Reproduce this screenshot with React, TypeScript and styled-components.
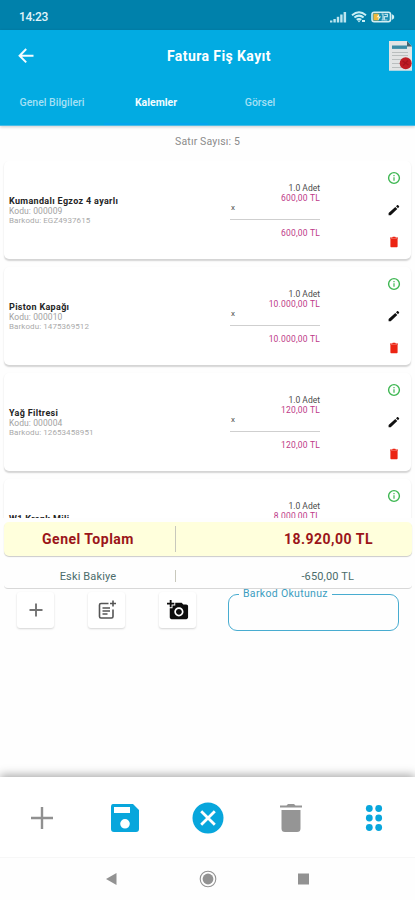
import React from "react";
import styled, { createGlobalStyle } from "styled-components";

const GlobalStyle = createGlobalStyle`
  * { box-sizing: border-box; }
  body { margin: 0; background: #fefefe; font-family: Roboto, "Noto Sans", sans-serif; }
  svg { display: block; flex: none; }
`;

const Screen = styled.div`
  width: 415px;
  height: 900px;
  display: flex;
  flex-direction: column;
  overflow: hidden;
  background: #fefefe;
`;

const StatusBar = styled.div`
  height: 30px;
  flex: none;
  display: flex;
  align-items: center;
  justify-content: space-between;
  padding: 4px 20px 0 19px;
  background: #0081ab;
  color: #e2f5fa;
  font-size: 12px;
  font-weight: 500;
  letter-spacing: -0.3px;
`;

const StatusIcons = styled.div`
  display: flex;
  align-items: center;
  gap: 4px;
`;

const Header = styled.header`
  height: 96px;
  flex: none;
  display: flex;
  flex-direction: column;
  background: #02abe2;
  border-bottom: 1px solid #48bce6;
  box-shadow: 0 1px 3px rgba(0, 0, 0, 0.2);
`;

const TitleRow = styled.div`
  height: 51px;
  display: grid;
  grid-template-columns: 60px 1fr 60px;
  align-items: center;
`;

const IconSlot = styled.div<{ $end?: boolean }>`
  display: flex;
  justify-content: ${(p) => (p.$end ? "flex-end" : "flex-start")};
  padding: ${(p) => (p.$end ? "0 2px 0 0" : "0 0 0 16px")};
`;

const Title = styled.h1`
  margin: 0;
  padding-left: 23px;
  text-align: center;
  font-size: 14px;
  line-height: 18px;
  font-weight: 700;
  letter-spacing: 0.42px;
  color: #fff;
`;

const Tabs = styled.nav`
  height: 44px;
  display: grid;
  grid-template-columns: repeat(4, 104px);
`;

const Tab = styled.div<{ $active?: boolean }>`
  display: flex;
  align-items: center;
  justify-content: center;
  padding-top: 1px;
  font-size: 10.5px;
  font-weight: ${(p) => (p.$active ? 700 : 500)};
  color: ${(p) => (p.$active ? "#f3fcff" : "#a5e0f5")};
  border-bottom: 2px solid ${(p) => (p.$active ? "#03a6ec" : "transparent")};
`;

const RowCount = styled.div`
  height: 35px;
  flex: none;
  padding-top: 9px;
  text-align: center;
  font-size: 10.5px;
  line-height: 13px;
  letter-spacing: 0.15px;
  color: #8b8b8b;
`;

const List = styled.main`
  height: 357px;
  flex: none;
  overflow: hidden;
  padding: 0 4px;
  display: flex;
  flex-direction: column;
  gap: 8px;
`;

const Card = styled.article`
  height: 98px;
  flex: none;
  display: grid;
  grid-template-columns: 1fr 91px 91px;
  border-radius: 5px;
  background: #fff;
  box-shadow: 0 1.5px 1.5px rgba(0, 0, 0, 0.17);
`;

const Product = styled.div`
  padding: 35px 0 0 5px;
  color: #a2a2a2;
  font-size: 8.5px;
  line-height: 10px;
  letter-spacing: 0.08px;
`;

const ProductName = styled.div`
  color: #242424;
  font-size: 9px;
  line-height: 10px;
  font-weight: 700;
  letter-spacing: 0.33px;
`;

const Barcode = styled.div`
  font-size: 8px;
  color: #aaa;
`;

const Amounts = styled.div`
  padding: 22px 0 0 1px;
  text-align: right;
  font-size: 8.5px;
  line-height: 10px;
  color: #4c4c4c;
`;

const Price = styled.div`
  color: #bd3a88;
  letter-spacing: 0.2px;
`;

const Multiplier = styled.div`
  height: 17px;
  margin-bottom: 8px;
  border-bottom: 1px solid #cfcfcf;
  text-align: left;
  padding-left: 1px;
  font-size: 8px;
  line-height: 10px;
`;

const Actions = styled.div`
  display: flex;
  flex-direction: column;
  align-items: center;
  gap: 18px;
  padding: 10px 0 0 57px;
`;

const GrandTotal = styled.div`
  height: 34px;
  flex: none;
  margin: 4px 3px 0 4px;
  display: grid;
  grid-template-columns: 171px 1fr;
  align-items: center;
  border-radius: 5px;
  background: #ffffdc;
  box-shadow: 0 1px 1px rgba(0, 0, 0, 0.2);
  color: #9b1519;
  font-size: 14px;
  line-height: 18px;
  font-weight: 700;
  letter-spacing: 0.5px;
`;

const Balance = styled.div`
  height: 33px;
  flex: none;
  margin: 0 3px 0 4px;
  padding-top: 8px;
  display: grid;
  grid-template-columns: 171px 1fr;
  align-items: center;
  border-radius: 4px;
  border-bottom: 1px solid #d8d8d8;
  color: #4b6c6b;
  font-size: 11px;
  letter-spacing: 0.15px;
`;

const SummaryLabel = styled.div`
  text-align: center;
  padding-right: 3px;
`;

const SummaryValue = styled.div<{ $height: number; $right: number }>`
  height: ${(p) => p.$height}px;
  display: flex;
  align-items: center;
  justify-content: flex-end;
  padding-right: ${(p) => p.$right}px;
  border-left: 1px solid #c8c8bc;
`;

const EntryRow = styled.div`
  flex: none;
  height: 42px;
  display: flex;
  align-items: flex-start;
  padding: 3px 16px 0 17px;
`;

const EntryButton = styled.button`
  width: 37px;
  height: 36px;
  margin-right: 34px;
  padding: 0;
  border: 0;
  border-radius: 3px;
  display: grid;
  place-items: center;
  background: #fff;
  box-shadow: 0 1px 2px rgba(0, 0, 0, 0.17);
`;

const BarcodeField = styled.fieldset`
  flex: 1;
  height: 43px;
  min-width: 0;
  margin: -4px 0 0 -2px;
  padding: 0 0 0 10px;
  border: 1.5px solid #48acd0;
  border-radius: 9px;
`;

const FieldLabel = styled.legend`
  padding: 0 4px;
  font-size: 10.5px;
  line-height: 12px;
  letter-spacing: 0.32px;
  color: #3b9dc0;
`;

const Spacer = styled.div`
  flex: 1;
`;

const Toolbar = styled.footer`
  height: 81px;
  flex: none;
  display: grid;
  grid-template-columns: repeat(5, 83px);
  justify-items: center;
  align-items: center;
  padding-top: 1px;
  background: #fff;
  border-bottom: 1px solid #f7f7f7;
  box-shadow: 0 -2px 9px rgba(0, 0, 0, 0.34);
`;

const SystemNav = styled.div`
  height: 42px;
  flex: none;
  display: flex;
  align-items: center;
  padding-left: 105px;
  gap: 81px;
  background: #fefefe;
`;

const items = [
  { name: "Kumandalı Egzoz 4 ayarlı", code: "000009", barcode: "EGZ4937615", price: "600,00 TL" },
  { name: "Piston Kapağı", code: "000010", barcode: "1475369512", price: "10.000,00 TL" },
  { name: "Yağ Filtresi", code: "000004", barcode: "12653458951", price: "120,00 TL" },
  { name: "W1 Krank Mili", code: "000001", barcode: "1265345896", price: "8.000,00 TL" },
];

const InfoIcon = () => (
  <svg width="14" height="14" viewBox="0 0 14 14">
    <circle cx="7" cy="7" r="5.4" fill="none" stroke="#3eb752" strokeWidth="1.4" />
    <path d="M7 6.2v3.6M7 4v1.2" stroke="#3eb752" strokeWidth="1.2" />
  </svg>
);

const PencilIcon = () => (
  <svg width="14" height="14" viewBox="0 0 14 14">
    <path d="M1.6 12.2v-2.1l6.7-6.2 2 2-6.6 6.3zM9 3.2l1.1-1c.3-.3.7-.3 1 0l.9.9c.3.3.3.7 0 1l-1 1.1z" fill="#111" />
  </svg>
);

const RedTrashIcon = () => (
  <svg width="14" height="14" viewBox="0 0 14 14">
    <path d="M3 2.4h2.2l.6-.6h2.4l.6.6H11v1.4H3zM3.4 4h7.2v7.2c0 .7-.4 1-1 1H4.4c-.6 0-1-.3-1-1z" fill="#ec2413" />
  </svg>
);

const StatusGlyphs = () => (
  <StatusIcons>
    <svg width="17" height="12" viewBox="0 0 17 12" fill="#bce5ef">
      <rect x="0" y="9.5" width="2.4" height="2" />
      <rect x="3.4" y="8" width="2.4" height="3.5" />
      <rect x="6.8" y="5.8" width="2.4" height="5.7" />
      <rect x="10.2" y="3.5" width="2.4" height="8" />
      <rect x="13.6" y="1" width="2.5" height="10.5" />
    </svg>
    <svg width="16" height="12" viewBox="0 0 16 12">
      <path d="M1 4.2Q8-1.6 15 4.2M3.4 6.5q4.6-3.7 9.2 0M5.7 8.8q2.3-1.7 4.6 0" fill="none" stroke="#c9eff5" strokeWidth="2" />
      <path d="M6.4 9.6h3.2L8 11.5zM11 9h3v2h-3z" fill="#c9eff5" />
    </svg>
    <svg width="24" height="12" viewBox="0 0 24 12">
      <rect x="1" y="1.2" width="18.5" height="9.6" rx="2.2" fill="#168bb0" stroke="#d3eef3" strokeWidth="1.6" />
      <path d="M20.8 3l2.3 1.7v2.6L20.8 9z" fill="#d3eef3" />
      <rect x="2.4" y="2.6" width="5.2" height="6.8" fill="#edb83c" />
      <path d="M8.4 2.5L5.5 6.3h2L6.8 9.5l3.3-4H8z" fill="#fff4ca" />
      <path d="M10.5 3h1.5v6h-1.5M13.4 3.3h3v2.4h-3V9h3" fill="none" stroke="#b8dfea" strokeWidth="1.2" />
    </svg>
  </StatusIcons>
);

const ReportIcon = () => (
  <svg width="25" height="32" viewBox="0 0 25 32">
    <path d="M1 1h18l5 5.2v24.6H1z" fill="#e2e4e4" />
    <path d="M19 1l5 5.5h-5z" fill="#45636e" />
    <path d="M4 5.5h15v3.4H4z" fill="#3c8ca5" />
    <path d="M4 12.5h16M4 15.5h16M4 19.5h10M4 23.5h8M4 27.5h9" stroke="#b9bebe" strokeWidth="1.1" />
    <circle cx="17.7" cy="23.3" r="6" fill="#be1d24" />
    <path d="M14.5 21l6 4M15 25.5l5-5" stroke="#a8151d" strokeWidth="1.4" />
  </svg>
);

const ItemCard = ({ item }: { item: (typeof items)[number] }) => (
  <Card>
    <Product>
      <ProductName>{item.name}</ProductName>
      <div>Kodu: {item.code}</div>
      <Barcode>Barkodu: {item.barcode}</Barcode>
    </Product>
    <Amounts>
      <div>1.0 Adet</div>
      <Price>{item.price}</Price>
      <Multiplier>x</Multiplier>
      <Price>{item.price}</Price>
    </Amounts>
    <Actions>
      <InfoIcon />
      <PencilIcon />
      <RedTrashIcon />
    </Actions>
  </Card>
);

export default function App() {
  return (
    <>
      <GlobalStyle />
      <Screen>
        <StatusBar>
          <span>14:23</span>
          <StatusGlyphs />
        </StatusBar>
        <Header>
          <TitleRow>
            <IconSlot>
              <svg width="20" height="20" viewBox="0 0 20 20">
                <path d="M17.5 9.7H4M10.2 3L3.6 9.7l6.6 6.7" fill="none" stroke="#f3fcff" strokeWidth="2" />
              </svg>
            </IconSlot>
            <Title>Fatura Fiş Kayıt</Title>
            <IconSlot $end>
              <ReportIcon />
            </IconSlot>
          </TitleRow>
          <Tabs>
            <Tab>Genel Bilgileri</Tab>
            <Tab $active>Kalemler</Tab>
            <Tab>Görsel</Tab>
          </Tabs>
        </Header>
        <RowCount>Satır Sayısı: 5</RowCount>
        <List>
          {items.map((item) => (
            <ItemCard key={item.name} item={item} />
          ))}
        </List>
        <GrandTotal>
          <SummaryLabel>Genel Toplam</SummaryLabel>
          <SummaryValue $height={26} $right={39}>18.920,00 TL</SummaryValue>
        </GrandTotal>
        <Balance>
          <SummaryLabel>Eski Bakiye</SummaryLabel>
          <SummaryValue $height={12} $right={58}>-650,00 TL</SummaryValue>
        </Balance>
        <EntryRow>
          <EntryButton>
            <svg width="22" height="22" viewBox="0 0 22 22">
              <path d="M11 4.5v13M4.5 11h13" stroke="#747474" strokeWidth="1.9" />
            </svg>
          </EntryButton>
          <EntryButton>
            <svg width="22" height="22" viewBox="0 0 22 22" fill="none" stroke="#555" strokeWidth="1.6">
              <path d="M12.5 4.5H5Q3.5 4.5 3.5 6v11.5Q3.5 19 5 19h10.5q1.5 0 1.5-1.5V10.5M6.5 9h7.5M6.5 12h7.5M6.5 15h5" />
              <path d="M17 1.5v6M14 4.5h6" />
            </svg>
          </EntryButton>
          <EntryButton>
            <svg width="22" height="22" viewBox="0 0 24 24">
              <path d="M3 4V1h2v3h3v2H5v3H3V6H0V4h3zm3 6V7h3V4h7l1.83 2H21c1.1 0 2 .9 2 2v12c0 1.1-.9 2-2 2H5c-1.1 0-2-.9-2-2V10h3zm7 9c2.76 0 5-2.24 5-5s-2.24-5-5-5-5 2.24-5 5 2.24 5 5 5zm-3.2-5c0 1.77 1.43 3.2 3.2 3.2s3.2-1.43 3.2-3.2-1.43-3.2-3.2-3.2-3.2 1.43-3.2 3.2z" fill="#0d0d0d" />
            </svg>
          </EntryButton>
          <BarcodeField>
            <FieldLabel>Barkod Okutunuz</FieldLabel>
          </BarcodeField>
        </EntryRow>
        <Spacer />
        <Toolbar>
          <svg width="28" height="28" viewBox="0 0 28 28">
            <path d="M14 3v22M3 14h22" stroke="#909090" strokeWidth="2.4" />
          </svg>
          <svg width="30" height="30" viewBox="0 0 30 30">
            <path fillRule="evenodd" d="M3 1h20l6 6v19q0 3-3 3H4q-3 0-3-3V4q0-3 2-3zm1 3v6h16V4zm11 12a4.8 4.8 0 1 0 0 9.6 4.8 4.8 0 0 0 0-9.6z" fill="#08a6dc" />
          </svg>
          <svg width="32" height="32" viewBox="0 0 32 32">
            <circle cx="16" cy="16" r="15.5" fill="#08a6dc" />
            <path d="M9.2 9.2l13.6 13.6M22.8 9.2L9.2 22.8" stroke="#fff" strokeWidth="2.8" />
          </svg>
          <svg width="24" height="30" viewBox="0 0 24 30">
            <path d="M1 2.5h6.5L9 1h6l1.5 1.5H23v2H1zM2.5 7h19v18.5q0 3.5-3.5 3.5H6q-3.5 0-3.5-3.5z" fill="#959595" />
          </svg>
          <svg width="20" height="28" viewBox="0 0 20 28" fill="#08a6dc">
            {[4.5, 14, 23.5].map((y) => (
              <g key={y}>
                <circle cx="5.3" cy={y} r="3.4" />
                <circle cx="14.7" cy={y} r="3.4" />
              </g>
            ))}
          </svg>
        </Toolbar>
        <SystemNav>
          <svg width="13" height="14" viewBox="0 0 13 14">
            <path d="M1 7l10.5-6v12z" fill="#929292" />
          </svg>
          <svg width="18" height="18" viewBox="0 0 18 18">
            <circle cx="9" cy="9" r="7.8" fill="none" stroke="#929292" strokeWidth="1.1" />
            <circle cx="9" cy="9" r="5.4" fill="#929292" />
          </svg>
          <svg width="11" height="12" viewBox="0 0 11 12">
            <path d="M0 .5h11v11H0z" fill="#929292" />
          </svg>
        </SystemNav>
      </Screen>
    </>
  );
}
